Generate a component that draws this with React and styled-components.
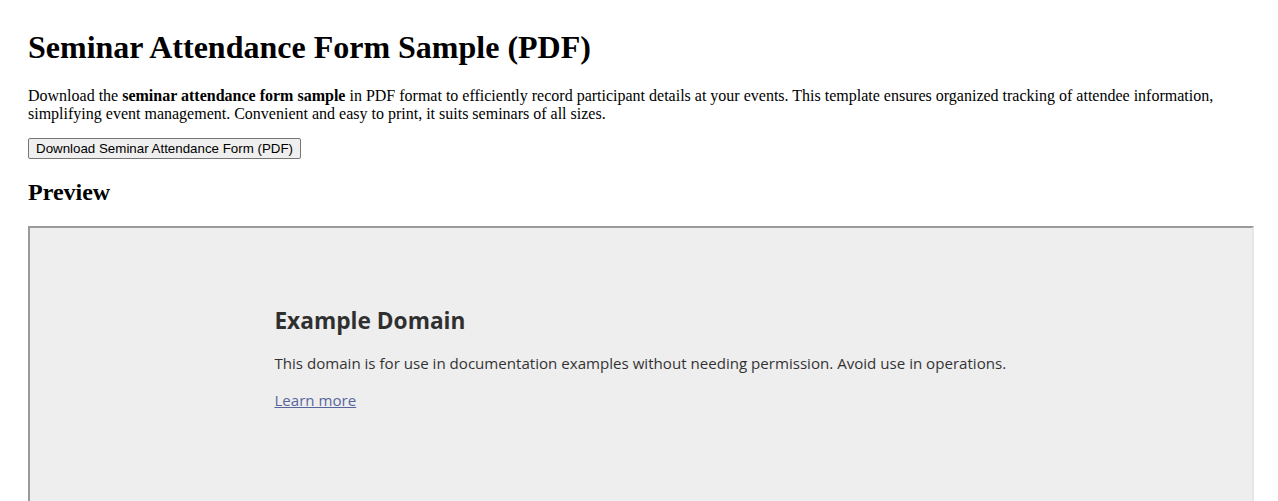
import styled, { createGlobalStyle } from "styled-components"

const GlobalStyle = createGlobalStyle`
  html, body {
    margin: 0;
    padding: 0;
    background: #fff;
  }
  body {
    margin: 8px;
    font-family: "Liberation Serif", "Times New Roman", serif;
    color: #000;
    overflow: hidden;
  }
`

const Page = styled.main`
  padding: 21px 20px 20px;
`

const Title = styled.h1`
  font-size: 32px;
  font-weight: bold;
  margin: 0 0 21.44px;
`

const Intro = styled.p`
  font-size: 16px;
  margin: 0 0 15px;
  line-height: normal;
`

const DownloadButton = styled.button`
  font-family: "Liberation Sans", Arial, sans-serif;
  font-size: 13.333px;
  color: #000;
  background: #efefef;
  border: 1px solid #767676;
  border-radius: 2px;
  padding: 2px 7px;
  line-height: normal;
  cursor: pointer;
`

const SectionTitle = styled.h2`
  font-size: 24px;
  font-weight: bold;
  margin: 20px 0 20px;
`

const PreviewFrame = styled.div`
  width: 100%;
  height: 460px;
  border-width: 2px;
  border-style: solid;
  border-color: #9a9a9a #e6e6e6 #e6e6e6 #9a9a9a;
  background: #eee;
  font-family: "Open Sans", "Noto Sans", sans-serif;
  color: #000;
`

const Sample = styled.div`
  width: 60%;
  margin: 0 auto;
  padding-top: 77px;
  opacity: 0.8;

  h1 {
    font-size: 22.7px;
    line-height: 32px;
    font-weight: bold;
    margin: 0 0 16px;
  }

  p {
    font-size: 15.1px;
    line-height: 21px;
    margin: 16px 0;
  }

  a {
    color: #348;
  }
`

export default function App() {
  return (
    <>
      <GlobalStyle />
      <Page>
        <Title>Seminar Attendance Form Sample (PDF)</Title>
        <Intro>
          Download the <strong>seminar attendance form sample</strong> in PDF format to efficiently
          record participant details at your events. This template ensures organized tracking of
          attendee information, simplifying event management. Convenient and easy to print, it suits
          seminars of all sizes.
        </Intro>
        <DownloadButton type="button">Download Seminar Attendance Form (PDF)</DownloadButton>
        <SectionTitle>Preview</SectionTitle>
        <PreviewFrame>
          <Sample>
            <h1>Example Domain</h1>
            <p>
              This domain is for use in documentation examples without needing permission. Avoid use
              in operations.
            </p>
            <p>
              <a href="#learn-more">Learn more</a>
            </p>
          </Sample>
        </PreviewFrame>
      </Page>
    </>
  )
}
